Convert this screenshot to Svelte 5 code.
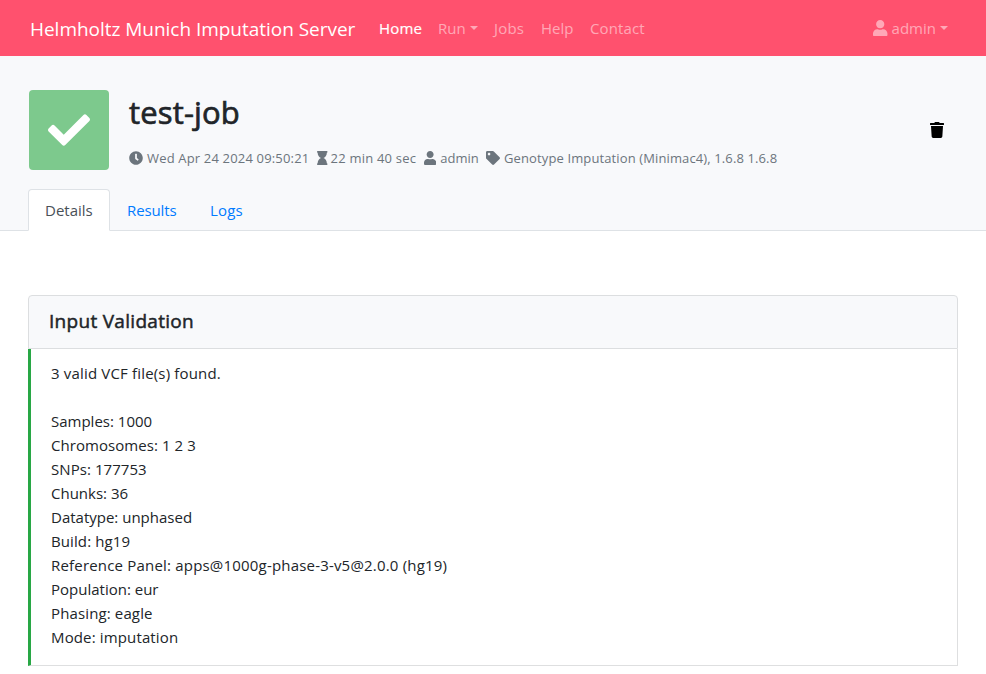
<script>
  const icons = {
    user: [448, 'M224 256c70.7 0 128-57.3 128-128S294.7 0 224 0 96 57.3 96 128s57.3 128 128 128zm89.6 32h-16.7c-22.2 10.2-46.9 16-72.9 16s-50.6-5.8-72.9-16h-16.7C60.2 288 0 348.2 0 422.4V464c0 26.5 21.5 48 48 48h352c26.5 0 48-21.5 48-48v-41.6c0-74.2-60.2-134.4-134.4-134.4z'],
    clock: [512, 'M256,8C119,8,8,119,8,256S119,504,256,504,504,393,504,256,393,8,256,8Zm92.49,313h0l-20,25a16,16,0,0,1-22.49,2.5h0l-67-49.72a40,40,0,0,1-15-31.23V112a16,16,0,0,1,16-16h32a16,16,0,0,1,16,16V256l58,42.5A16,16,0,0,1,348.49,321Z'],
    hourglass: [384, 'M360 0H24C10.745 0 0 10.745 0 24v16c0 13.255 10.745 24 24 24 0 90.965 51.016 167.734 120.842 192C75.016 280.266 24 357.035 24 448c-13.255 0-24 10.745-24 24v16c0 13.255 10.745 24 24 24h336c13.255 0 24-10.745 24-24v-16c0-13.255-10.745-24-24-24 0-90.965-51.016-167.734-120.842-192C308.984 231.734 360 154.965 360 64c13.255 0 24-10.745 24-24V24c0-13.255-10.745-24-24-24z'],
    tag: [512, 'M0 252.118V48C0 21.49 21.49 0 48 0h204.118a48 48 0 0 1 33.941 14.059l211.882 211.882c18.745 18.745 18.745 49.137 0 67.882L293.823 497.941c-18.745 18.745-49.137 18.745-67.882 0L14.059 286.059A48 48 0 0 1 0 252.118zM112 64c-26.51 0-48 21.49-48 48s21.49 48 48 48 48-21.49 48-48-21.49-48-48-48z'],
    trash: [448, 'M432 32H312l-9.4-18.7A24 24 0 0 0 281.1 0H166.8a23.72 23.72 0 0 0-21.4 13.3L136 32H16A16 16 0 0 0 0 48v32a16 16 0 0 0 16 16h416a16 16 0 0 0 16-16V48a16 16 0 0 0-16-16zM53.2 467a48 48 0 0 0 47.9 45h245.8a48 48 0 0 0 47.9-45L416 128H32z'],
    check: [512, 'M173.898 439.404l-166.4-166.4c-9.997-9.997-9.997-26.206 0-36.204l36.203-36.204c9.997-9.998 26.207-9.998 36.204 0L192 312.69 432.095 72.596c9.997-9.997 26.207-9.997 36.204 0l36.203 36.204c9.997 9.997 9.997 26.206 0 36.204l-294.4 294.401c-9.998 9.997-26.207 9.997-36.204-.001z']
  };

  // Each line carries its own tracking in pixels.
  const results = [
    ['Samples: 1000', 0],
    ['Chromosomes: 1 2 3', 0.06],
    ['SNPs: 177753', 0.06],
    ['Chunks: 36', 0],
    ['Datatype: unphased', 0],
    ['Build: hg19', 0.1],
    ['Reference Panel: apps@1000g-phase-3-v5@2.0.0 (hg19)', 0.19],
    ['Population: eur', 0],
    ['Phasing: eagle', 0.13],
    ['Mode: imputation', 0.14]
  ];
</script>

{#snippet icon(name, size)}
  <svg class="icon" width={(size * icons[name][0]) / 512} height={size} viewBox="0 0 {icons[name][0]} 512" aria-hidden="true">
    <path d={icons[name][1]} fill="currentColor" />
  </svg>
{/snippet}

<nav class="navbar">
  <a class="brand" href="#home">Helmholtz Munich Imputation Server</a>
  <a class="link home" href="#home">Home</a>
  <a class="link run" href="#run">Run<i class="caret"></i></a>
  <a class="link jobs" href="#jobs">Jobs</a>
  <a class="link help" href="#help">Help</a>
  <a class="link contact" href="#contact">Contact</a>
  <a class="link account" href="#account">{@render icon('user', 16.5)}<span>admin</span><i class="caret"></i></a>
</nav>

<header class="job">
  <div class="summary">
    <div class="status">{@render icon('check', 42)}</div>
    <div class="info">
      <h2>test-job</h2>
      <div class="meta">
        <span class="item date">{@render icon('clock', 14)}<span>Wed Apr 24 2024 09:50:21</span></span>
        <span class="item duration">{@render icon('hourglass', 14)}<span>22 min 40 sec</span></span>
        <span class="item owner">{@render icon('user', 14)}<span>admin</span></span>
        <span class="item app">{@render icon('tag', 14)}<span>Genotype Imputation (Minimac4), 1.6.8 1.6.8</span></span>
      </div>
    </div>
    <button class="delete" aria-label="Delete job">{@render icon('trash', 16)}</button>
  </div>
  <div class="tabs">
    <a class="tab active" href="#details">Details</a>
    <a class="tab results" href="#results">Results</a>
    <a class="tab logs" href="#logs">Logs</a>
  </div>
</header>

<main>
  <section class="card">
    <h5>Input Validation</h5>
    <div class="body">
      <p class="found">3 valid VCF file(s) found.</p>
      {#each results as [line, tracking]}
        <p style:letter-spacing="{tracking}px">{line}</p>
      {/each}
    </div>
  </section>
</main>

<style>
  :global(body) {
    margin: 0;
    background: #fff;
    color: #212529;
    font: 400 15px/24px 'Open Sans', 'Noto Sans', sans-serif;
  }
  .icon { display: block; flex: none; }
  a { text-decoration: none; white-space: nowrap; }

  .navbar {
    display: flex;
    align-items: center;
    box-sizing: border-box;
    height: 56px;
    padding: 0 38px 0 30px;
    background: #ff516e;
  }
  .brand { width: 349px; padding-top: 1px; color: #fff; font-size: 19px; letter-spacing: -0.03px; }
  .link { color: rgba(255, 255, 255, 0.5); }
  .home { width: 59px; color: #fff; letter-spacing: 0.15px; -webkit-text-stroke: 0.2px; }
  .run { width: 56px; display: flex; align-items: center; }
  .jobs { width: 47px; letter-spacing: 0.2px; }
  .help { width: 49px; }
  .contact { letter-spacing: 0.13px; }
  .account { display: flex; align-items: center; margin-left: auto; }
  .account span { margin-left: 4px; }
  .caret {
    margin-left: 4px;
    border: 4.5px solid transparent;
    border-top-color: currentColor;
    border-bottom: 0;
  }

  .job {
    display: flex;
    flex-direction: column;
    box-sizing: border-box;
    height: 175px;
    padding: 34px 28px 0;
    background: #f8f9fb;
    border-bottom: 1px solid #dee2e6;
  }
  .summary { display: flex; height: 80px; padding-left: 1px; }
  .status {
    display: flex;
    align-items: center;
    justify-content: center;
    width: 80px;
    height: 80px;
    border-radius: 4px;
    background: #7dc98d;
    color: #fff;
  }
  .info { margin-left: 20px; }
  h2 {
    margin: 3px 0 0;
    font-size: 31px;
    line-height: 38px;
    font-weight: 400;
    letter-spacing: 0.15px;
    -webkit-text-stroke: 0.7px;
  }
  .meta { display: flex; margin-top: 16px; color: #6c757d; font-size: 13px; line-height: 22px; white-space: nowrap; }
  .item { display: flex; align-items: center; }
  .item span { margin-left: 4px; }
  .date { width: 188px; letter-spacing: 0.17px; }
  .duration { width: 107px; letter-spacing: 0.22px; }
  .duration span { margin-left: 3px; }
  .owner { width: 62px; }
  .app { letter-spacing: 0.12px; }
  .delete { align-self: center; margin: 0 14px 0 auto; padding: 0; border: 0; background: none; color: #000; }

  .tabs { display: flex; margin-top: 19px; }
  .tab { box-sizing: border-box; height: 42px; padding: 8px 16px; border: 1px solid transparent; color: #007bff; }
  .active {
    width: 82px;
    color: #495057;
    background: #fff;
    border-color: #dee2e6 #dee2e6 #fff;
    border-radius: 4px 4px 0 0;
  }
  .results { width: 83px; letter-spacing: -0.12px; }
  .logs { letter-spacing: 0.2px; }

  main { padding: 64px 28px 0; }
  h5 {
    box-sizing: border-box;
    height: 54px;
    margin: 0;
    padding: 12px 20px;
    border: 1px solid #dcdee0;
    border-radius: 4px 4px 0 0;
    background: #f8f9fb;
    font-size: 19px;
    font-weight: 400;
    line-height: 26px;
    letter-spacing: 0.3px;
    -webkit-text-stroke: 0.5px;
  }
  .body {
    box-sizing: border-box;
    height: 317px;
    padding: 12px 20px;
    border: 1px solid #dedfe0;
    border-top: 0;
    border-left: 3px solid #28a745;
  }
  p { margin: 0; }
  .found { margin-bottom: 24px; letter-spacing: 0.17px; }
</style>
